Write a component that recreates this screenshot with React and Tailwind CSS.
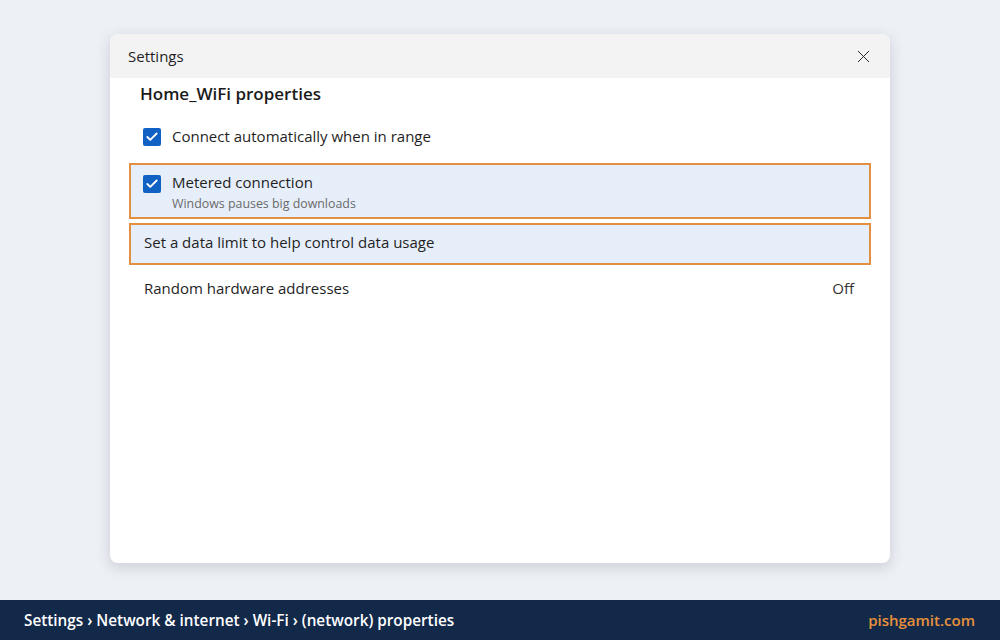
import { X, Check } from 'lucide-react';

const font = { fontFamily: '"Open Sans", "Noto Sans", "Liberation Sans", sans-serif' };

function Checkbox() {
  return (
    <span className="w-[18px] h-[18px] rounded-[2px] bg-[#1160c4] flex items-center justify-center shrink-0">
      <Check size={14} strokeWidth={3.2} className="text-white" />
    </span>
  );
}

export default function App() {
  return (
    <div className="w-[1000px] h-[640px] bg-[#edf0f5] flex flex-col overflow-hidden" style={font}>
      <div className="flex-1 pt-[34px] pl-[110px]">
        <div className="w-[780px] h-[529px] bg-white rounded-[8px] overflow-hidden shadow-[0_4px_14px_rgba(40,50,70,0.18)] flex flex-col">
          <div className="h-[44px] bg-[#f3f3f3] flex items-center justify-between pl-[18px] pr-[16px]">
            <span className="text-[15px] text-[#1f1f1f]">Settings</span>
            <X size={21} strokeWidth={1.1} className="text-[#222]" />
          </div>

          <div className="px-[19px] flex flex-col">
            <h2 className="pl-[11px] h-[32px] text-[17px] font-semibold text-[#1b1b1b] leading-[32px]">Home_WiFi properties</h2>

            <div className="h-[53px] flex items-center gap-[11px] pl-[14px]">
              <Checkbox />
              <span className="text-[15px] text-[#1f1f1f]">Connect automatically when in range</span>
            </div>

            <div className="h-[56px] border-2 border-[#e38f41] bg-[#e6eefa] flex items-start gap-[11px] pl-[12px] pt-[7px]">
              <span className="mt-[3px]"><Checkbox /></span>
              <div className="flex flex-col">
                <span className="text-[15px] leading-[21px] text-[#1f1f1f]">Metered connection</span>
                <span className="text-[12.4px] leading-[21px] text-[#6a6a6a]">Windows pauses big downloads</span>
              </div>
            </div>

            <div className="mt-[4px] h-[42px] border-2 border-[#e38f41] bg-[#e6eefa] flex items-center pl-[13px] pb-[3px]">
              <span className="text-[15px] text-[#1f1f1f]">Set a data limit to help control data usage</span>
            </div>

            <div className="h-[46px] flex items-center justify-between pl-[15px] pr-[17px]">
              <span className="text-[15px] text-[#1f1f1f]">Random hardware addresses</span>
              <span className="text-[15px] text-[#333]">Off</span>
            </div>
          </div>
        </div>
      </div>

      <div className="h-[40px] bg-[#12294a] flex items-center justify-between pl-[24px] pr-[25px]">
        <span className="text-[15.3px] font-semibold text-white">Settings › Network &amp; internet › Wi-Fi › (network) properties</span>
        <span className="text-[15px] font-semibold text-[#e8913c]">pishgamit.com</span>
      </div>
    </div>
  );
}
